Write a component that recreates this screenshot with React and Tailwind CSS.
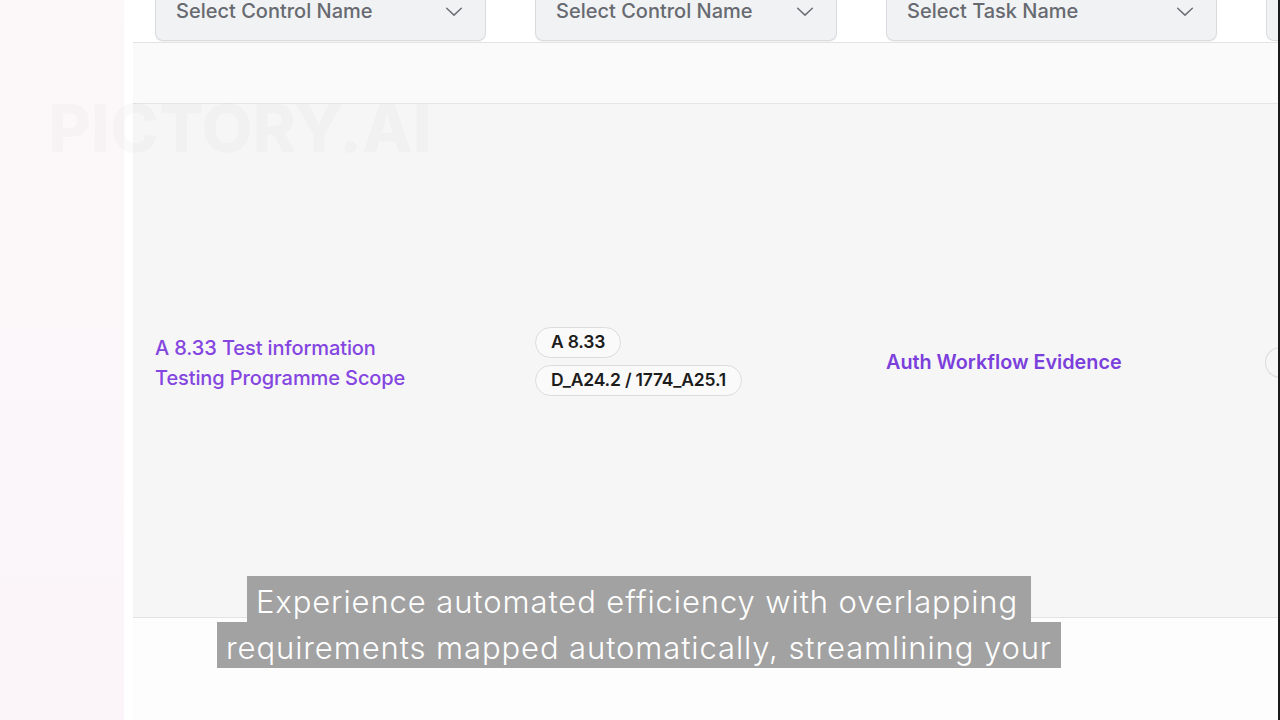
import React from "react";

function Chevron() {
  return (
    <svg width="22" height="22" viewBox="0 0 24 24" fill="none" stroke="#6b6e73" strokeWidth="1.6" strokeLinecap="round" strokeLinejoin="round">
      <path d="M4 9l8 7.5L20 9" />
    </svg>
  );
}

function Dropdown({ label, width }) {
  return (
    <div
      className={`flex h-[41px] shrink-0 items-center justify-between rounded-b-lg border border-t-0 border-[#d9dbde] bg-[#f1f2f4] pl-5 pr-5 shadow-[0_1px_1px_rgba(0,0,0,0.05)] ${width}`}
    >
      <span className="-mt-[18px] text-[20px] font-medium text-[#676a70]">{label}</span>
      <span className="-mt-[18px]">
        <Chevron />
      </span>
    </div>
  );
}

function Pill({ children }) {
  return (
    <span className="inline-flex h-[31px] items-center rounded-full border border-[#dcdcdc] bg-[#fafafa] px-[15px] text-[17.5px] font-semibold tracking-[-0.2px] text-[#1c1c1c]">
      {children}
    </span>
  );
}

export default function App() {
  return (
    <div className="relative flex h-[720px] w-[1280px] overflow-hidden bg-white font-['Inter',sans-serif]">
      <aside className="h-full w-[124px] shrink-0 bg-gradient-to-b from-[#fcf8f9] to-[#fbf5f9]" />
      <div className="w-[9px] shrink-0 bg-white" />
      <main className="flex min-w-0 flex-1 flex-col bg-[#fdfdfd]">
        <div className="flex h-[43px] shrink-0 items-start gap-[49px] overflow-hidden border-b border-[#e3e3e3] bg-white pl-[22px]">
          <Dropdown label="Select Control Name" width="w-[331px]" />
          <Dropdown label="Select Control Name" width="w-[302px]" />
          <Dropdown label="Select Task Name" width="w-[331px]" />
          <div className="h-[41px] w-[40px] shrink-0 rounded-bl-lg border border-t-0 border-r-0 border-[#d9dbde] bg-[#f1f2f4]" />
        </div>
        <div className="h-[61px] shrink-0 border-b border-[#e6e6e6] bg-[#fafafa]" />
        <div className="flex h-[514px] shrink-0 items-center overflow-hidden border-b border-[#e3e3e3] bg-[#f6f6f6] pl-[22px] pt-[4px]">
          <div className="w-[380px] shrink-0 text-[20px] font-medium leading-[30px] tracking-[-0.1px] text-[#8445e0]">
            <div>A 8.33 Test information</div>
            <div>Testing Programme Scope</div>
          </div>
          <div className="-mt-[3px] flex w-[351px] shrink-0 flex-col items-start gap-[7px]">
            <Pill>A 8.33</Pill>
            <Pill>D_A24.2 / 1774_A25.1</Pill>
          </div>
          <div className="w-[379px] shrink-0 text-[19.8px] font-semibold text-[#7b3fdc]">Auth Workflow Evidence</div>
          <div className="h-[31px] w-[30px] shrink-0 rounded-l-full border border-r-0 border-[#dcdcdc]" />
        </div>
        <div className="flex-1 bg-[#fdfdfd]" />
      </main>
      <div className="w-[2px] shrink-0 bg-[#1a1a1a]" />

      <div className="pointer-events-none absolute left-[48px] top-[42px] select-none text-[38px] font-bold leading-[46px] text-black/[0.025]">
        VIDEO MADE WITH
      </div>
      <div className="pointer-events-none absolute left-[48px] top-[88px] select-none text-[66px] font-extrabold leading-[80px] text-black/[0.02]">
        PICTORY.AI
      </div>

      <div className="absolute left-0 top-[576px] flex w-[1278px] flex-col items-center font-['Inter',sans-serif] text-[31px] font-light leading-[43px] text-white">
        <div className="h-[46px] bg-[#a2a2a2] pl-[9px] pr-[13px] pt-[4px] tracking-[0.9px]">Experience automated efficiency with overlapping</div>
        <div className="h-[46px] bg-[#a2a2a2] px-[9px] pt-[4px] tracking-[0.9px]">requirements mapped automatically, streamlining your</div>
      </div>
    </div>
  );
}
